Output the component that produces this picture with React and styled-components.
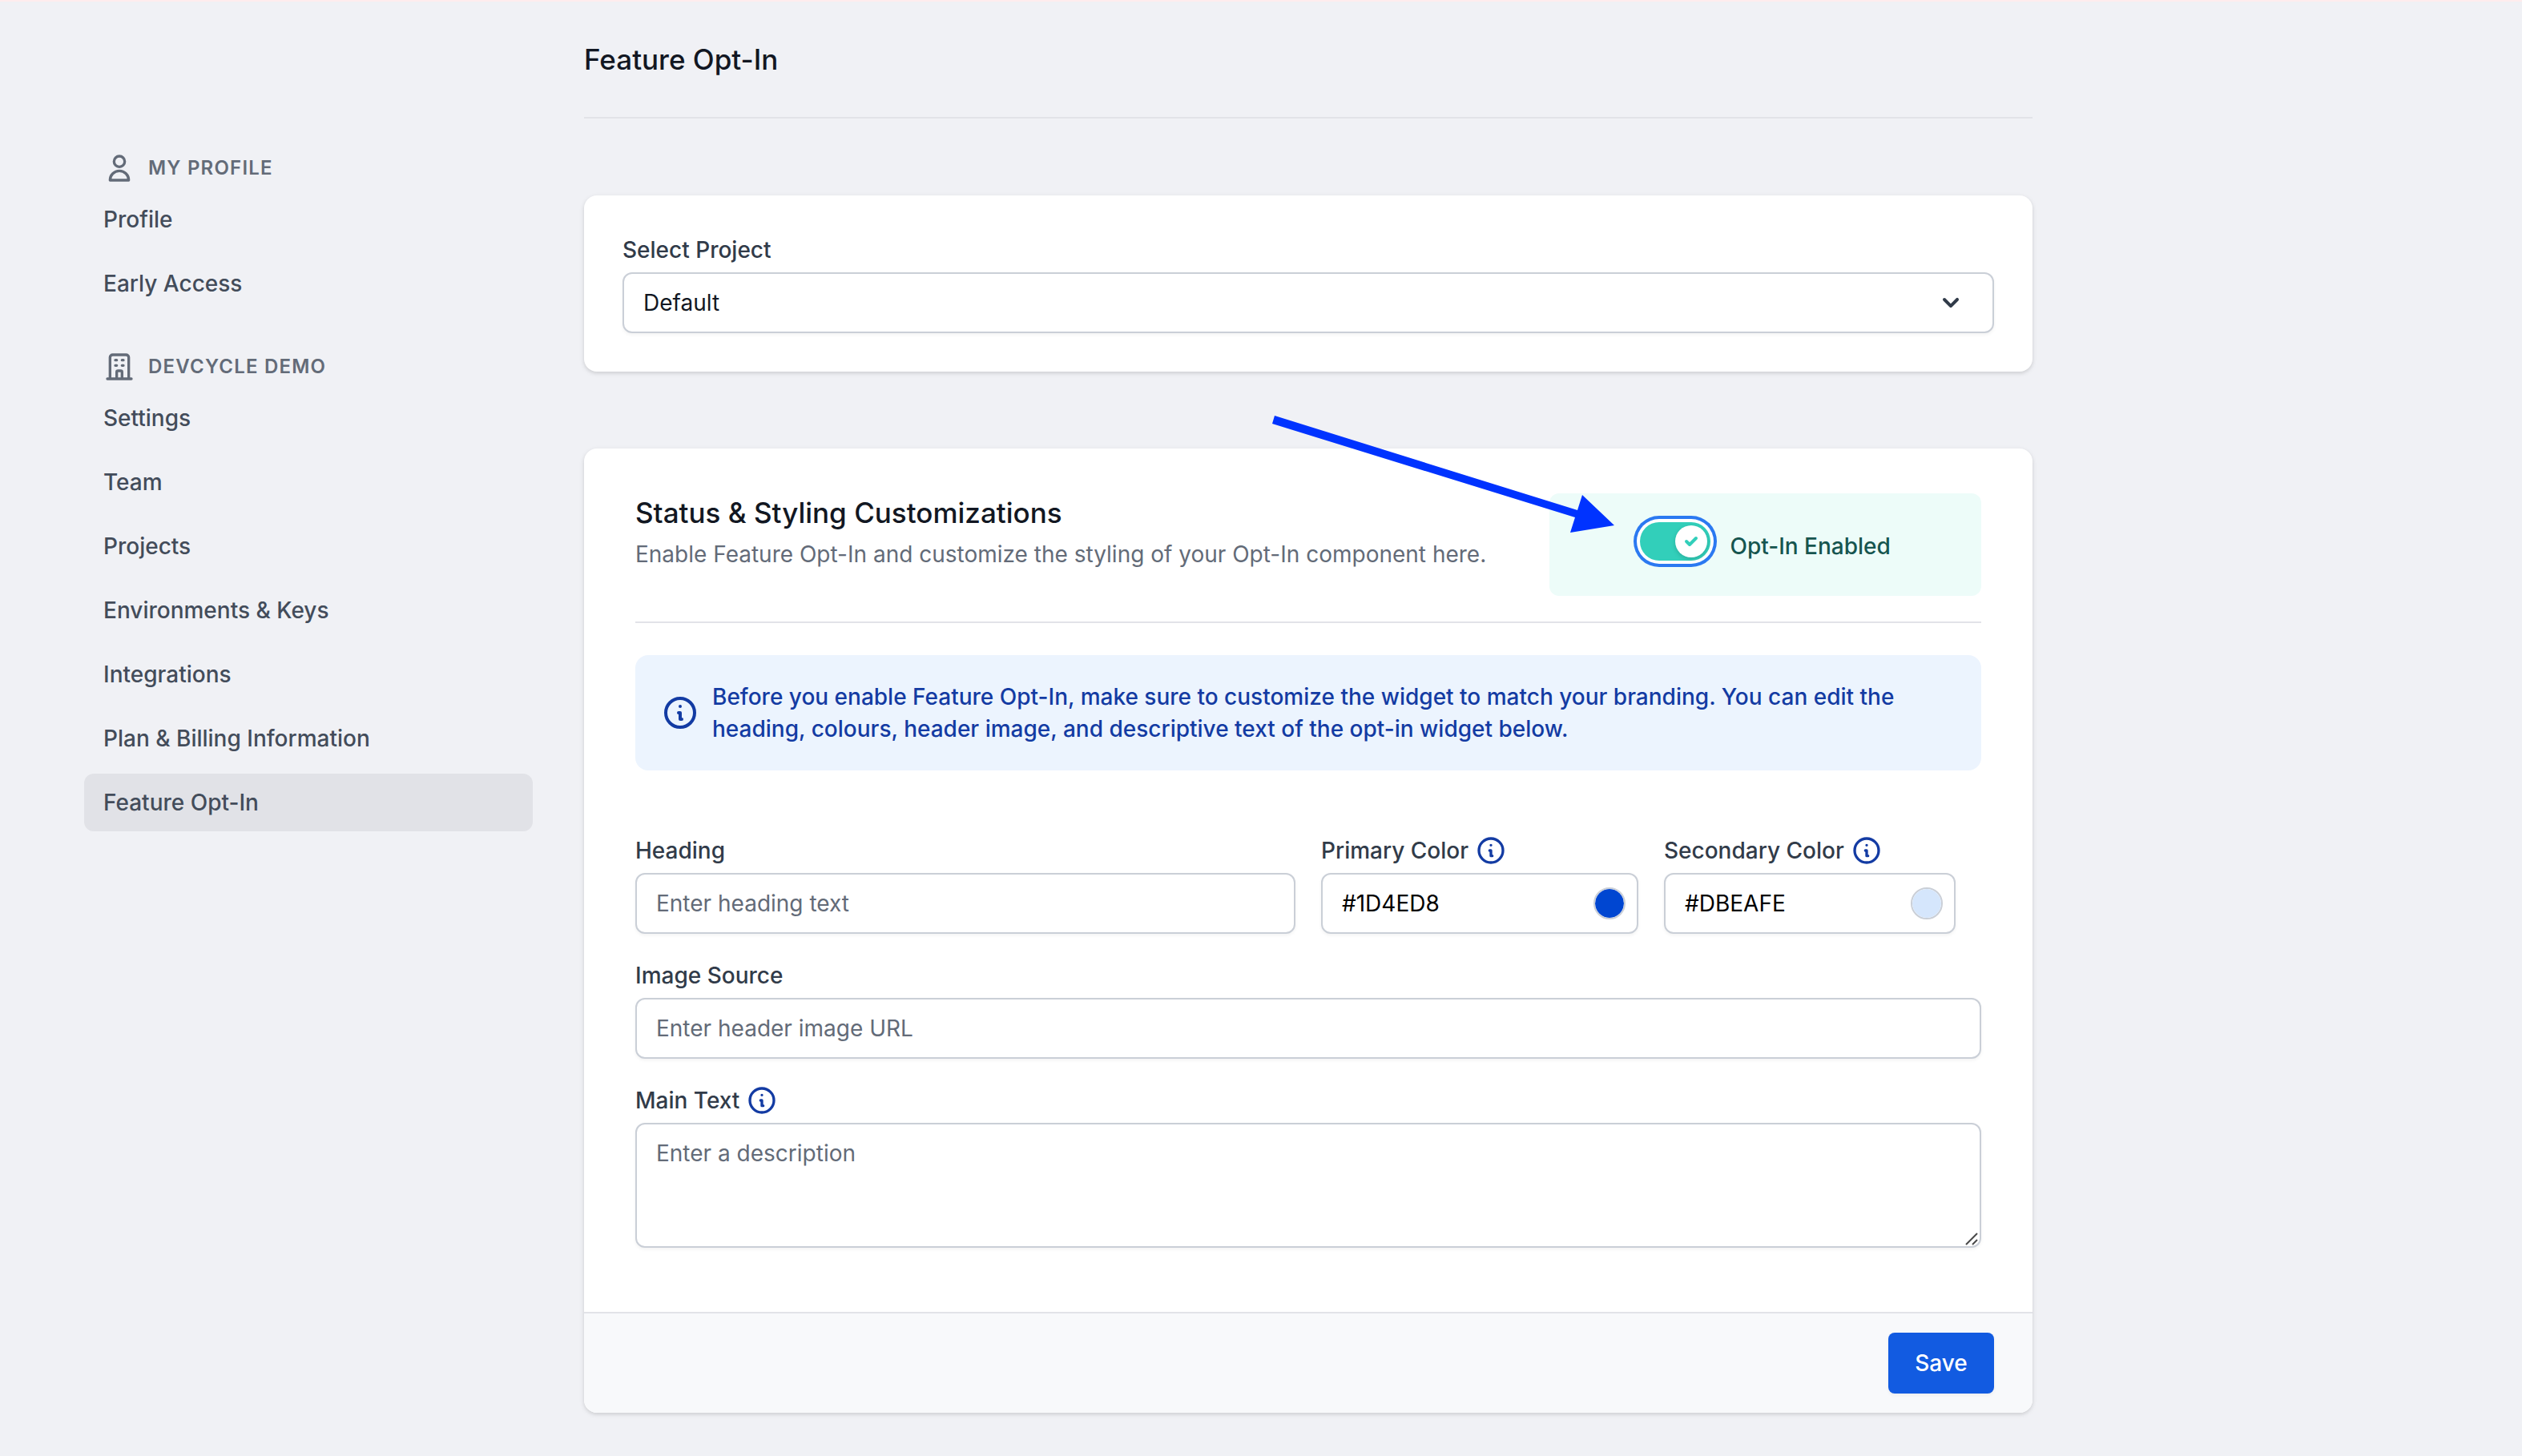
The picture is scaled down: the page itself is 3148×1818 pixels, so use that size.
import React, { useState } from "react";
import styled, { createGlobalStyle } from "styled-components";

const color = {
  page: "#f0f1f5",
  ink: "#121722",
  label: "#313b49",
  nav: "#434c5a",
  muted: "#636b78",
  line: "#e2e3e8",
  field: "#cacfd7",
  info: "#133ba3",
  primary: "#125be1",
};

const GlobalStyle = createGlobalStyle`
  *, *::before, *::after { box-sizing: border-box; }
  body {
    margin: 0;
    background: ${color.page};
    color: ${color.ink};
    font-family: Inter, "Liberation Sans", sans-serif;
    font-size: 28px;
    line-height: 40px;
  }
  h1, h2, h3, p, ul { margin: 0; padding: 0; }
  input, select, textarea, button { font: inherit; }
`;

const Page = styled.div`
  min-height: 100vh;
  border-top: 2px solid #feeced;
`;

const Layout = styled.div`
  display: grid;
  grid-template-columns: repeat(12, minmax(0, 1fr));
  column-gap: 64px;
  max-width: 2537px;
  padding: 48px 0 48px 105px;
`;

const Sidebar = styled.nav`
  grid-column: span 3;
  display: flex;
  flex-direction: column;
  gap: 48px;
  padding-top: 140px;
`;

const NavSection = styled.section`
  display: flex;
  flex-direction: column;
  gap: 8px;
`;

const NavHeading = styled.h3`
  display: flex;
  align-items: center;
  gap: 16px;
  padding: 0 24px;
  color: ${color.muted};
  font-size: 24px;
  font-weight: 600;
  letter-spacing: 0.05em;
  text-transform: uppercase;
`;

const NavList = styled.ul`
  display: flex;
  flex-direction: column;
  gap: 8px;
  list-style: none;
`;

const NavLink = styled.a`
  display: block;
  padding: 16px 24px;
  border-radius: 12px;
  background: ${(p) => (p.$active ? "#e1e2e7" : "transparent")};
  color: ${color.nav};
  font-weight: 500;
  text-decoration: none;
`;

const Main = styled.main`
  grid-column: span 9;
  display: flex;
  flex-direction: column;
  gap: 96px;
`;

const PageHeader = styled.header`
  padding-bottom: 48px;
  border-bottom: 2px solid ${color.line};
`;

const PageTitle = styled.h1`
  font-size: 35px;
  line-height: 48px;
  font-weight: 500;
`;

const Card = styled.section`
  border-radius: 16px;
  background: #fff;
  box-shadow: 0 2px 6px rgba(0, 0, 0, 0.1), 0 2px 4px rgba(0, 0, 0, 0.06);
`;

const ProjectCard = styled(Card)`
  padding: 48px;
`;

const Field = styled.div`
  display: flex;
  flex-direction: column;
  gap: 8px;
  min-width: 0;
`;

const LabelRow = styled.div`
  display: flex;
  align-items: center;
  gap: 8px;
`;

const Label = styled.label`
  color: ${color.label};
  font-weight: 500;
`;

const fieldBox = `
  width: 100%;
  border: 2px solid ${color.field};
  border-radius: 12px;
  background: #fff;
  box-shadow: 0 2px 4px rgba(0, 0, 0, 0.05);
`;

const TextInput = styled.input`
  ${fieldBox}
  height: 76px;
  padding: 16px 24px;
  color: #000;
  &::placeholder { color: ${color.muted}; opacity: 1; }
`;

const TextArea = styled.textarea`
  ${fieldBox}
  display: block;
  height: 156px;
  padding: 16px 24px;
  color: #000;
  resize: none;
  &::placeholder { color: ${color.muted}; opacity: 1; }
`;

const Overlaid = styled.div`
  position: relative;
`;

const Grip = styled.svg`
  position: absolute;
  right: 4px;
  bottom: 3px;
`;

const Select = styled.select`
  ${fieldBox}
  display: block;
  height: 76px;
  padding: 16px 80px 16px 24px;
  color: ${color.ink};
  appearance: none;
`;

const Chevron = styled.svg`
  position: absolute;
  right: 34px;
  top: 18px;
  color: ${color.label};
  pointer-events: none;
`;

const CardBody = styled.div`
  padding: 56px 64px 80px;
`;

const CardHeader = styled.header`
  display: grid;
  grid-template-columns: repeat(3, minmax(0, 1fr));
  gap: 32px;
  padding-bottom: 32px;
  border-bottom: 2px solid ${color.line};
`;

const CardIntro = styled.div`
  grid-column: span 2;
  display: flex;
  flex-direction: column;
  gap: 8px;
`;

const CardTitle = styled.h2`
  font-size: 35px;
  line-height: 48px;
  font-weight: 500;
`;

const CardText = styled.p`
  color: ${color.muted};
`;

const StatusBox = styled.div`
  position: relative;
  display: flex;
  justify-content: center;
  align-items: flex-start;
  gap: 24px;
  padding: 36px 32px 32px;
  border-radius: 12px;
  background: #edfcf9;
`;

const Arrow = styled.svg`
  position: absolute;
  left: -348px;
  top: -98px;
  pointer-events: none;
`;

const Switch = styled.span`
  display: grid;
  width: 88px;
  height: 48px;
  & > * { grid-area: 1 / 1; }
`;

const SwitchInput = styled.input`
  width: 88px;
  height: 48px;
  margin: 0;
  border-radius: 24px;
  background: ${(p) => (p.checked ? "#32cfba" : "#d1d5db")};
  box-shadow: 0 0 0 4px #fff, 0 0 0 8px #2b79f1;
  appearance: none;
  outline: none;
`;

const Knob = styled.span`
  display: grid;
  place-items: center;
  justify-self: ${(p) => (p.$on ? "end" : "start")};
  width: 40px;
  height: 40px;
  margin: 4px;
  border-radius: 50%;
  background: #fff;
  color: #32cfba;
  box-shadow: 0 2px 6px rgba(0, 0, 0, 0.1), 0 2px 4px rgba(0, 0, 0, 0.06);
  pointer-events: none;
`;

const SwitchLabel = styled.label`
  color: #16554f;
  line-height: 60px;
  font-weight: 500;
`;

const Notice = styled.div`
  display: flex;
  align-items: center;
  gap: 16px;
  margin-top: 40px;
  padding: 32px;
  border-radius: 16px;
  background: #ecf4fe;
  color: ${color.info};
  font-weight: 500;
`;

const NoticeText = styled.p`
  flex: 1;
`;

const Form = styled.div`
  display: flex;
  flex-direction: column;
  gap: 32px;
  margin-top: 80px;
`;

const BrandRow = styled.div`
  display: grid;
  grid-template-columns: 206fr 99fr 91fr;
  gap: 32px;
  padding-right: 32px;
`;

const ColorBox = styled.div`
  ${fieldBox}
  display: flex;
  align-items: center;
  height: 76px;
  padding: 0 14px 0 24px;
`;

const ColorText = styled.input`
  flex: 1;
  min-width: 0;
  padding: 0;
  border: 0;
  background: transparent;
  color: #000;
  outline: none;
`;

const Swatch = styled.input`
  flex: none;
  width: 40px;
  height: 40px;
  padding: 0;
  border: 2px solid ${color.field};
  border-radius: 50%;
  background: transparent;
  appearance: none;
  overflow: hidden;
  &::-webkit-color-swatch-wrapper { padding: 0; }
  &::-webkit-color-swatch { border: 0; border-radius: 50%; }
`;

const CardFooter = styled.footer`
  display: flex;
  justify-content: flex-end;
  padding: 24px 48px;
  border-top: 2px solid ${color.line};
  border-radius: 0 0 16px 16px;
  background: #f8f9fb;
`;

const SaveButton = styled.button`
  min-width: 132px;
  height: 76px;
  padding: 0 32px;
  border: 0;
  border-radius: 8px;
  background: ${color.primary};
  color: #fff;
  font-weight: 500;
  box-shadow: 0 2px 4px rgba(0, 0, 0, 0.05);
`;

const IconSvg = styled.svg`
  flex: none;
  fill: none;
  stroke: currentColor;
  stroke-width: 2;
  stroke-linecap: round;
  stroke-linejoin: round;
`;

const InfoSvg = styled(IconSvg)`
  color: ${color.info};
`;

const Icon = ({ d }) => (
  <IconSvg width="40" height="40" viewBox="0 0 24 24" aria-hidden="true">
    <path d={d} />
  </IconSvg>
);

const InfoIcon = ({ size = 40 }) => (
  <InfoSvg width={size} height={size} viewBox="0 0 24 24" aria-hidden="true">
    <path d="M13 16h-1v-4h-1m1-4h.01M21 12a9 9 0 11-18 0 9 9 0 0118 0z" />
  </InfoSvg>
);

const sections = [
  {
    title: "My Profile",
    icon: "M16 7a4 4 0 11-8 0 4 4 0 018 0zM12 14a7 7 0 00-7 7h14a7 7 0 00-7-7z",
    items: ["Profile", "Early Access"],
  },
  {
    title: "DevCycle Demo",
    icon: "M19 21V5a2 2 0 00-2-2H7a2 2 0 00-2 2v16m14 0h2m-2 0h-5m-9 0H3m2 0h5M9 7h1m-1 4h1m4-4h1m-1 4h1m-5 10v-5a1 1 0 011-1h2a1 1 0 011 1v5m-4 0h4",
    items: [
      "Settings",
      "Team",
      "Projects",
      "Environments & Keys",
      "Integrations",
      "Plan & Billing Information",
      "Feature Opt-In",
    ],
  },
];

function ColorField({ id, label, value, swatch }) {
  const [text, setText] = useState(value);
  const [picked, setPicked] = useState(swatch);
  return (
    <Field>
      <LabelRow>
        <Label htmlFor={id}>{label}</Label>
        <InfoIcon />
      </LabelRow>
      <ColorBox>
        <ColorText id={id} type="text" value={text} onChange={(e) => setText(e.target.value)} />
        <Swatch
          type="color"
          aria-label={label}
          value={picked}
          onChange={(e) => {
            setPicked(e.target.value);
            setText(e.target.value.toUpperCase());
          }}
        />
      </ColorBox>
    </Field>
  );
}

export default function App() {
  const [enabled, setEnabled] = useState(true);
  return (
    <Page>
      <GlobalStyle />
      <Layout>
        <Sidebar>
          {sections.map((section) => (
            <NavSection key={section.title}>
              <NavHeading>
                <Icon d={section.icon} />
                {section.title}
              </NavHeading>
              <NavList>
                {section.items.map((item) => (
                  <li key={item}>
                    <NavLink href="#" $active={item === "Feature Opt-In"}>
                      {item}
                    </NavLink>
                  </li>
                ))}
              </NavList>
            </NavSection>
          ))}
        </Sidebar>

        <Main>
          <PageHeader>
            <PageTitle>Feature Opt-In</PageTitle>
          </PageHeader>

          <ProjectCard>
            <Field>
              <Label htmlFor="project">Select Project</Label>
              <Overlaid>
                <Select id="project" defaultValue="default">
                  <option value="default">Default</option>
                </Select>
                <Chevron width="40" height="40" viewBox="0 0 20 20" fill="currentColor" aria-hidden="true">
                  <path d="M5.293 7.293a1 1 0 011.414 0L10 10.586l3.293-3.293a1 1 0 111.414 1.414l-4 4a1 1 0 01-1.414 0l-4-4a1 1 0 010-1.414z" />
                </Chevron>
              </Overlaid>
            </Field>
          </ProjectCard>

          <Card>
            <CardBody>
              <CardHeader>
                <CardIntro>
                  <CardTitle>Status &amp; Styling Customizations</CardTitle>
                  <CardText>
                    Enable Feature Opt-In and customize the styling of your Opt-In component here.
                  </CardText>
                </CardIntro>
                <StatusBox>
                  <Switch>
                    <SwitchInput
                      id="optin"
                      type="checkbox"
                      role="switch"
                      checked={enabled}
                      onChange={(e) => setEnabled(e.target.checked)}
                    />
                    <Knob $on={enabled}>
                      <svg width="24" height="24" viewBox="0 0 12 12" fill="currentColor" aria-hidden="true">
                        <path d="M3.707 5.293a1 1 0 00-1.414 1.414l1.414-1.414zM5 8l-.707.707a1 1 0 001.414 0L5 8zm4.707-3.293a1 1 0 00-1.414-1.414l1.414 1.414zm-7.414 2l2 2 1.414-1.414-2-2-1.414 1.414zm3.414 2l4-4-1.414-1.414-4 4 1.414 1.414z" />
                      </svg>
                    </Knob>
                  </Switch>
                  <SwitchLabel htmlFor="optin">Opt-In Enabled</SwitchLabel>
                  <Arrow width="432" height="150" viewBox="0 0 432 150" aria-hidden="true">
                    <path d="M5 1L383 119L389 100L429 138L374 147L380 128L2 11Z" fill="#0033ff" />
                  </Arrow>
                </StatusBox>
              </CardHeader>

              <Notice>
                <InfoIcon size={48} />
                <NoticeText>
                  Before you enable Feature Opt-In, make sure to customize the widget to match your
                  branding. You can edit the heading, colours, header image, and descriptive text of
                  the opt-in widget below.
                </NoticeText>
              </Notice>

              <Form>
                <BrandRow>
                  <Field>
                    <Label htmlFor="heading">Heading</Label>
                    <TextInput id="heading" type="text" placeholder="Enter heading text" />
                  </Field>
                  <ColorField id="primary" label="Primary Color" value="#1D4ED8" swatch="#0046d1" />
                  <ColorField id="secondary" label="Secondary Color" value="#DBEAFE" swatch="#d5e6fc" />
                </BrandRow>
                <Field>
                  <Label htmlFor="image">Image Source</Label>
                  <TextInput id="image" type="text" placeholder="Enter header image URL" />
                </Field>
                <Field>
                  <LabelRow>
                    <Label htmlFor="text">Main Text</Label>
                    <InfoIcon />
                  </LabelRow>
                  <Overlaid>
                    <TextArea id="text" placeholder="Enter a description" />
                    <Grip width="16" height="16" viewBox="0 0 16 16" aria-hidden="true">
                      <path d="M1 15L15 1M9 15L15 9" stroke="#4a4a4a" strokeWidth="2" />
                    </Grip>
                  </Overlaid>
                </Field>
              </Form>
            </CardBody>
            <CardFooter>
              <SaveButton type="button">Save</SaveButton>
            </CardFooter>
          </Card>
        </Main>
      </Layout>
    </Page>
  );
}
